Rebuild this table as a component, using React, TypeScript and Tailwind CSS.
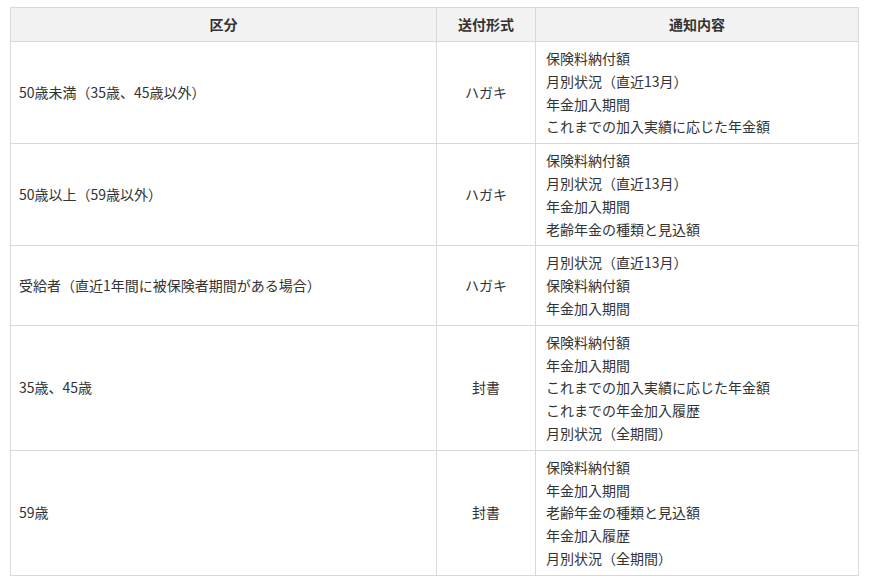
import React from 'react';

interface Row {
  category: string;
  format: string;
  items: string[];
}

const rows: Row[] = [
  {
    category: '50歳未満（35歳、45歳以外）',
    format: 'ハガキ',
    items: ['保険料納付額', '月別状況（直近13月）', '年金加入期間', 'これまでの加入実績に応じた年金額'],
  },
  {
    category: '50歳以上（59歳以外）',
    format: 'ハガキ',
    items: ['保険料納付額', '月別状況（直近13月）', '年金加入期間', '老齢年金の種類と見込額'],
  },
  {
    category: '受給者（直近1年間に被保険者期間がある場合）',
    format: 'ハガキ',
    items: ['月別状況（直近13月）', '保険料納付額', '年金加入期間'],
  },
  {
    category: '35歳、45歳',
    format: '封書',
    items: ['保険料納付額', '年金加入期間', 'これまでの加入実績に応じた年金額', 'これまでの年金加入履歴', '月別状況（全期間）'],
  },
  {
    category: '59歳',
    format: '封書',
    items: ['保険料納付額', '年金加入期間', '老齢年金の種類と見込額', '年金加入履歴', '月別状況（全期間）'],
  },
];

export default function App() {
  return (
    <div
      className="w-[870px] h-[584px] bg-white pt-[7px] pl-[10px] text-[14px] text-[#333]"
      style={{ fontFamily: '"Noto Sans CJK JP", "Noto Sans", sans-serif' }}
    >
      <table className="w-[848px] border-collapse table-fixed">
        <colgroup>
          <col className="w-[426px]" />
          <col className="w-[99px]" />
          <col className="w-[323px]" />
        </colgroup>
        <thead>
          <tr className="bg-[#f2f2f2] h-[34px]">
            <th className="border border-[#d9d9d9] font-bold text-center">区分</th>
            <th className="border border-[#d9d9d9] font-bold text-center">送付形式</th>
            <th className="border border-[#d9d9d9] font-bold text-center">通知内容</th>
          </tr>
        </thead>
        <tbody>
          {rows.map((row, i) => (
            <tr key={i}>
              <td className="border border-[#d9d9d9] px-[8px] align-middle leading-[22.8px]">{row.category}</td>
              <td className="border border-[#d9d9d9] text-center align-middle leading-[22.8px]">{row.format}</td>
              <td className="border border-[#d9d9d9] pl-[10px] pr-2 py-[5px] leading-[22.8px]">
                {row.items.map(item => (
                  <div key={item}>{item}</div>
                ))}
              </td>
            </tr>
          ))}
        </tbody>
      </table>
    </div>
  );
}
